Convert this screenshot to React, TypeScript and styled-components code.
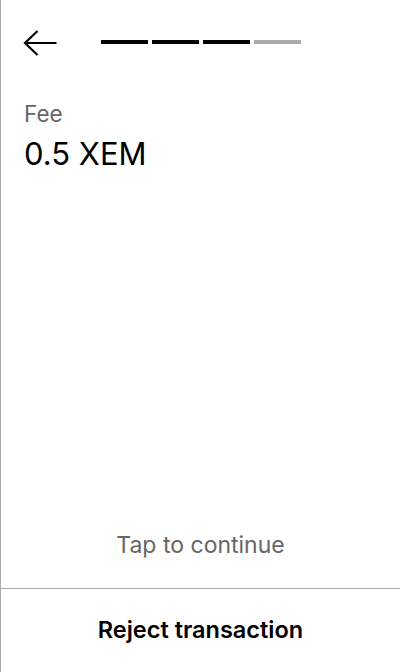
import React from "react";
import styled, { createGlobalStyle } from "styled-components";

const Global = createGlobalStyle`
  html, body { margin: 0; padding: 0; background: #fff; }
  body { font-family: Inter, "Noto Sans", sans-serif; -webkit-font-smoothing: antialiased; }
  * { box-sizing: border-box; }
`;

const Screen = styled.div`
  width: 400px;
  height: 672px;
  display: flex;
  flex-direction: column;
  border-left: 1px solid #aaaaaa;
  background: #fff;
`;

const Header = styled.div`
  display: flex;
  align-items: center;
  height: 26px;
  margin-top: 30px;
  padding-left: 22px;
  gap: 44px;
`;

const BackButton = styled.button`
  display: flex;
  align-items: center;
  justify-content: center;
  border: 0;
  background: none;
  padding: 0;
  width: 34px;
  height: 26px;
  cursor: pointer;
`;

const Steps = styled.div`
  display: grid;
  grid-template-columns: repeat(4, 47px);
  gap: 4px;
  margin-top: -2px;
`;

const Step = styled.div<{ $done: boolean }>`
  height: 4px;
  background: ${(p) => (p.$done ? "#000" : "#aaaaaa")};
`;

const Content = styled.div`
  flex: 1;
  display: flex;
  flex-direction: column;
  padding: 44px 23px 0;
`;

const Label = styled.div`
  font-size: 22.5px;
  line-height: 28px;
  color: #666666;
`;

const Value = styled.div`
  font-size: 31px;
  line-height: 36px;
  color: #000;
  margin-top: 8px;
`;

const Hint = styled.div`
  margin-top: auto;
  text-align: center;
  font-size: 23px;
  line-height: 28px;
  color: #666666;
  padding-bottom: 29px;
`;

const Footer = styled.button`
  height: 84px;
  border: 0;
  border-top: 1px solid #aaaaaa;
  background: #fff;
  font-family: inherit;
  font-size: 23.5px;
  font-weight: 600;
  color: #000;
  cursor: pointer;
  padding: 0 0 2px;
`;

export default function App() {
  const steps = [true, true, true, false];
  return (
    <>
      <Global />
      <Screen>
        <Header>
          <BackButton aria-label="Back">
            <svg width="34" height="26" viewBox="0 0 34 26" fill="none">
              <path d="M33.5 13H2.5M14.5 1L2 13L14.5 25" stroke="#000" strokeWidth="2.2" />
            </svg>
          </BackButton>
          <Steps>
            {steps.map((d, i) => (
              <Step key={i} $done={d} />
            ))}
          </Steps>
        </Header>
        <Content>
          <Label>Fee</Label>
          <Value>0.5 XEM</Value>
          <Hint>Tap to continue</Hint>
        </Content>
        <Footer>Reject transaction</Footer>
      </Screen>
    </>
  );
}
